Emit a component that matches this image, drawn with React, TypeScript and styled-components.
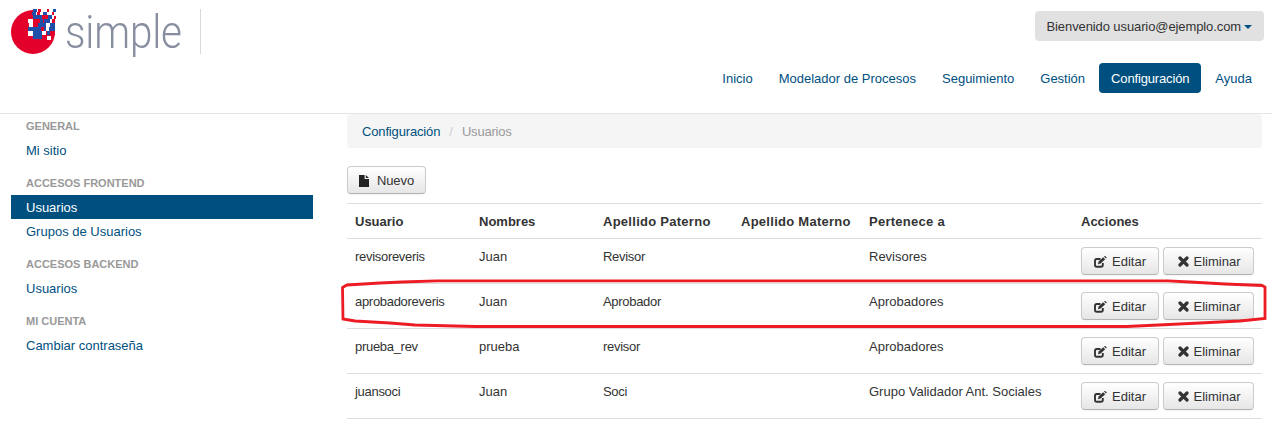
import React from "react";
import styled, { createGlobalStyle } from "styled-components";

const Global = createGlobalStyle`
  html, body { margin: 0; padding: 0; background: #fff; }
  body { font-family: "Liberation Sans", Arial, sans-serif; font-size: 13px; line-height: 20px; color: #333; }
  * { box-sizing: border-box; }
`;

const Page = styled.div`
  position: relative;
  width: 1272px;
  height: 425px;
  overflow: hidden;
`;

const Header = styled.header`
  height: 114px;
  border-bottom: 1px solid #e5e5e5;
  display: flex;
  justify-content: space-between;
  padding: 0 8px 0 11px;
`;

const Brand = styled.div`
  display: flex;
  align-items: flex-start;
  padding-top: 9px;
`;

const LogoName = styled.span`
  display: block;
  font-family: Roboto, sans-serif;
  font-weight: 300;
  font-size: 47px;
  line-height: 45px;
  letter-spacing: -0.2px;
  color: #868e9f;
  margin-left: 9px;
  width: 135px;
  height: 45px;
  transform: scaleX(0.86);
  transform-origin: left center;
`;

const LogoDivider = styled.span`
  width: 1px;
  height: 45px;
  background: #d9d9d9;
`;

const HeaderRight = styled.div`
  display: flex;
  flex-direction: column;
  align-items: flex-end;
  padding-top: 11px;
`;

const UserMenu = styled.div`
  height: 30px;
  padding: 6px 12px 4px;
  display: flex;
  align-items: center;
  background: #e1e1e1;
  border-radius: 4px;
  color: #333;
  font-size: 13px;
  letter-spacing: -0.1px;
`;

const Caret = styled.span`
  width: 0;
  height: 0;
  margin-left: 3px;
  border-left: 4px solid transparent;
  border-right: 4px solid transparent;
  border-top: 4px solid #00507f;
`;

const Nav = styled.nav`
  display: flex;
  margin-top: 22px;
  gap: 2px;
`;

const NavItem = styled.a<{ $active?: boolean }>`
  height: 30px;
  padding: 6px 12px 4px;
  border-radius: 4px;
  font-size: 13px;
  letter-spacing: ${(p) => (p.$active ? "-0.15px" : "0")};
  color: ${(p) => (p.$active ? "#fff" : "#00507f")};
  background: ${(p) => (p.$active ? "#00507f" : "transparent")};
`;

const Body = styled.div`
  display: flex;
`;

const Sidebar = styled.aside`
  width: 302px;
  margin-left: 11px;
  flex: none;
`;

const SideHeading = styled.div`
  height: 24px;
  font-size: 11px;
  font-weight: bold;
  line-height: 24px;
  padding-left: 15px;
  color: #999;
  text-transform: uppercase;
  a + & { margin-top: 9px; }
`;

const SideLink = styled.a<{ $active?: boolean }>`
  display: block;
  height: 24px;
  line-height: 25px;
  padding-left: 15px;
  font-size: 13px;
  color: ${(p) => (p.$active ? "#fff" : "#00507f")};
  background: ${(p) => (p.$active ? "#00507f" : "transparent")};
`;

const Main = styled.main`
  margin-left: 34px;
  width: 915px;
`;

const Breadcrumb = styled.div`
  height: 34px;
  padding: 8px 15px 6px;
  background: #f5f5f5;
  border-radius: 4px;
  display: flex;
  font-size: 13px;
  color: #999;
`;

const CrumbLink = styled.a`
  color: #00507f;
  letter-spacing: -0.15px;
`;

const CrumbDivider = styled.span`
  color: #ccc;
  padding: 0 9px;
`;

const CrumbCurrent = styled.span`
  letter-spacing: -0.2px;
`;

const Toolbar = styled.div`
  margin-top: 18px;
  height: 37px;
`;

const Button = styled.button<{ $gap: number }>`
  display: inline-flex;
  align-items: center;
  justify-content: center;
  gap: ${(p) => p.$gap}px;
  height: 28px;
  padding: 1px 0 0;
  font: inherit;
  font-size: 13px;
  color: #333;
  background: linear-gradient(#fff, #e6e6e6);
  border: 1px solid #ccc;
  border-bottom-color: #b3b3b3;
  border-radius: 4px;
  box-shadow: inset 0 1px 0 rgba(255, 255, 255, 0.2), 0 1px 2px rgba(0, 0, 0, 0.05);
`;

const NewButton = styled(Button)`
  width: 79px;
  letter-spacing: -0.1px;
`;

const EditButton = styled(Button)`
  width: 78px;
`;

const DeleteButton = styled(Button)`
  width: 91px;
  padding-left: 1px;
`;

const Table = styled.table`
  width: 100%;
  border-collapse: collapse;
  table-layout: fixed;
  font-size: 13px;
`;

const Th = styled.th<{ $w: number; $wide?: boolean }>`
  width: ${(p) => p.$w}px;
  height: 35px;
  padding: 2px 8px 0;
  text-align: left;
  font-weight: bold;
  letter-spacing: ${(p) => (p.$wide ? "0.27px" : "0")};
  color: #333;
  border-top: 1px solid #ddd;
  border-bottom: 1px solid #ddd;
`;

const Td = styled.td<{ $tight?: boolean }>`
  height: 45px;
  padding: 8px 8px 0;
  vertical-align: top;
  letter-spacing: ${(p) => (p.$tight ? "-0.3px" : "0")};
  border-bottom: 1px solid #ddd;
  color: #333;
`;

const Actions = styled.div`
  display: flex;
  gap: 4px;
`;

const Highlight = styled.svg`
  position: absolute;
  left: 0;
  top: 0;
  pointer-events: none;
`;

const LogoMark = styled.svg`
  flex: none;
  filter: blur(0.45px);
`;

type Cell = [number, number, number, number, string];
const B = "#1f4fa8";
const R = "#e3002b";
const W = "#ffffff";
const logoCells: Cell[] = [
  [33, 9, 4, 3, B], [38, 9, 3, 3, R], [47, 9, 2, 3, R], [53, 9, 3, 3, B],
  [32, 12, 4, 3, B], [37, 12, 3, 3, R], [43, 12, 4, 3, B], [52, 12, 2, 3, R],
  [33, 15, 9, 4, B], [43, 15, 5, 4, R], [48, 15, 4, 4, B], [54, 16, 2, 3, R],
  [28, 19, 5, 4, W], [35, 19, 5, 4, R], [40, 19, 3, 4, B], [44, 19, 6, 4, B], [52, 19, 3, 4, R],
  [29, 23, 4, 4, W], [33, 23, 5, 4, R], [38, 23, 8, 4, B], [50, 23, 5, 4, B],
  [28, 27, 27, 4, B], [41, 27, 3, 4, R], [46, 27, 3, 4, W],
  [28, 31, 5, 5, W], [33, 31, 9, 8, B], [42, 31, 4, 4, W], [47, 31, 3, 4, B], [50, 31, 5, 4, R],
  [47, 36, 4, 4, W],
];

const Logo = () => (
  <LogoMark width="45" height="46" viewBox="11 9 45 46">
    <circle cx="33" cy="32" r="22" fill={R} />
    <rect x="46" y="8" width="10" height="19" fill={W} />
    <rect x="36" y="8" width="12" height="7" fill={W} />
    {logoCells.map(([x, y, w, h, c], i) => (
      <rect key={i} x={x} y={y} width={w} height={h} fill={c} />
    ))}
  </LogoMark>
);

const FileIcon = () => (
  <svg width="10" height="12" viewBox="0 0 10 12">
    <path d="M0 0H5.6V4H10V12H0Z M6.8 0L10 3H6.8Z" fill="#222" />
  </svg>
);

const EditIcon = () => (
  <svg width="13" height="12" viewBox="0 0 13 12">
    <path d="M8.8 7V9A1.8 1.8 0 0 1 7 10.8H2.8A1.8 1.8 0 0 1 1 9V4.8A1.8 1.8 0 0 1 2.8 3H6.5" fill="none" stroke="#333" strokeWidth="1.9" />
    <path d="M4 8.2L4.6 5.6L9.2 1.2L11.2 3.2L6.6 7.6Z" fill="#333" />
    <path d="M10 0.4L11.9 2.4L12.8 1.4L11 -0.2Z" fill="#333" />
  </svg>
);

const CrossIcon = () => (
  <svg width="11" height="11" viewBox="0 0 11 11">
    <path d="M2 2L9 9M9 2L2 9" stroke="#333" strokeWidth="3.2" strokeLinecap="round" />
  </svg>
);

const rows = [
  ["revisoreveris", "Juan", "Revisor", "", "Revisores"],
  ["aprobadoreveris", "Juan", "Aprobador", "", "Aprobadores"],
  ["prueba_rev", "prueba", "revisor", "", "Aprobadores"],
  ["juansoci", "Juan", "Soci", "", "Grupo Validador Ant. Sociales"],
];

export default function App() {
  return (
    <Page>
      <Global />
      <Header>
        <Brand>
          <Logo />
          <LogoName>simple</LogoName>
          <LogoDivider />
        </Brand>
        <HeaderRight>
          <UserMenu>Bienvenido usuario@ejemplo.com<Caret /></UserMenu>
          <Nav>
            <NavItem>Inicio</NavItem>
            <NavItem>Modelador de Procesos</NavItem>
            <NavItem>Seguimiento</NavItem>
            <NavItem>Gestión</NavItem>
            <NavItem $active>Configuración</NavItem>
            <NavItem>Ayuda</NavItem>
          </Nav>
        </HeaderRight>
      </Header>
      <Body>
        <Sidebar>
          <SideHeading>General</SideHeading>
          <SideLink>Mi sitio</SideLink>
          <SideHeading>Accesos Frontend</SideHeading>
          <SideLink $active>Usuarios</SideLink>
          <SideLink>Grupos de Usuarios</SideLink>
          <SideHeading>Accesos Backend</SideHeading>
          <SideLink>Usuarios</SideLink>
          <SideHeading>Mi cuenta</SideHeading>
          <SideLink>Cambiar contraseña</SideLink>
        </Sidebar>
        <Main>
          <Breadcrumb>
            <CrumbLink>Configuración</CrumbLink>
            <CrumbDivider>/</CrumbDivider>
            <CrumbCurrent>Usuarios</CrumbCurrent>
          </Breadcrumb>
          <Toolbar>
            <NewButton $gap={8}><FileIcon /> Nuevo</NewButton>
          </Toolbar>
          <Table>
            <thead>
              <tr>
                <Th $w={124}>Usuario</Th>
                <Th $w={124}>Nombres</Th>
                <Th $w={138} $wide>Apellido Paterno</Th>
                <Th $w={128} $wide>Apellido Materno</Th>
                <Th $w={212} $wide>Pertenece a</Th>
                <Th $w={189}>Acciones</Th>
              </tr>
            </thead>
            <tbody>
              {rows.map((r) => (
                <tr key={r[0]}>
                  {r.map((c, i) => <Td key={i} $tight={i === 0 || i === 2}>{c}</Td>)}
                  <Td>
                    <Actions>
                      <EditButton $gap={5}><EditIcon /> Editar</EditButton>
                      <DeleteButton $gap={5}><CrossIcon /> Eliminar</DeleteButton>
                    </Actions>
                  </Td>
                </tr>
              ))}
            </tbody>
          </Table>
        </Main>
      </Body>
      <Highlight width="1272" height="425" viewBox="0 0 1272 425">
        <path
          d="M342.5 287.5 L347 285 L380 283 L402 282 L437 280.8 L1168 280.8 L1190 282 L1225 284 L1262 285.5 L1265 287 L1265 318.5 L1240 321 L1200 323 L1127 326.5 L475 326.5 L415 325 L390 323 L355 321 L343 319 Z"
          fill="none"
          stroke="#ed1c24"
          strokeWidth="2.8"
        />
      </Highlight>
    </Page>
  );
}
